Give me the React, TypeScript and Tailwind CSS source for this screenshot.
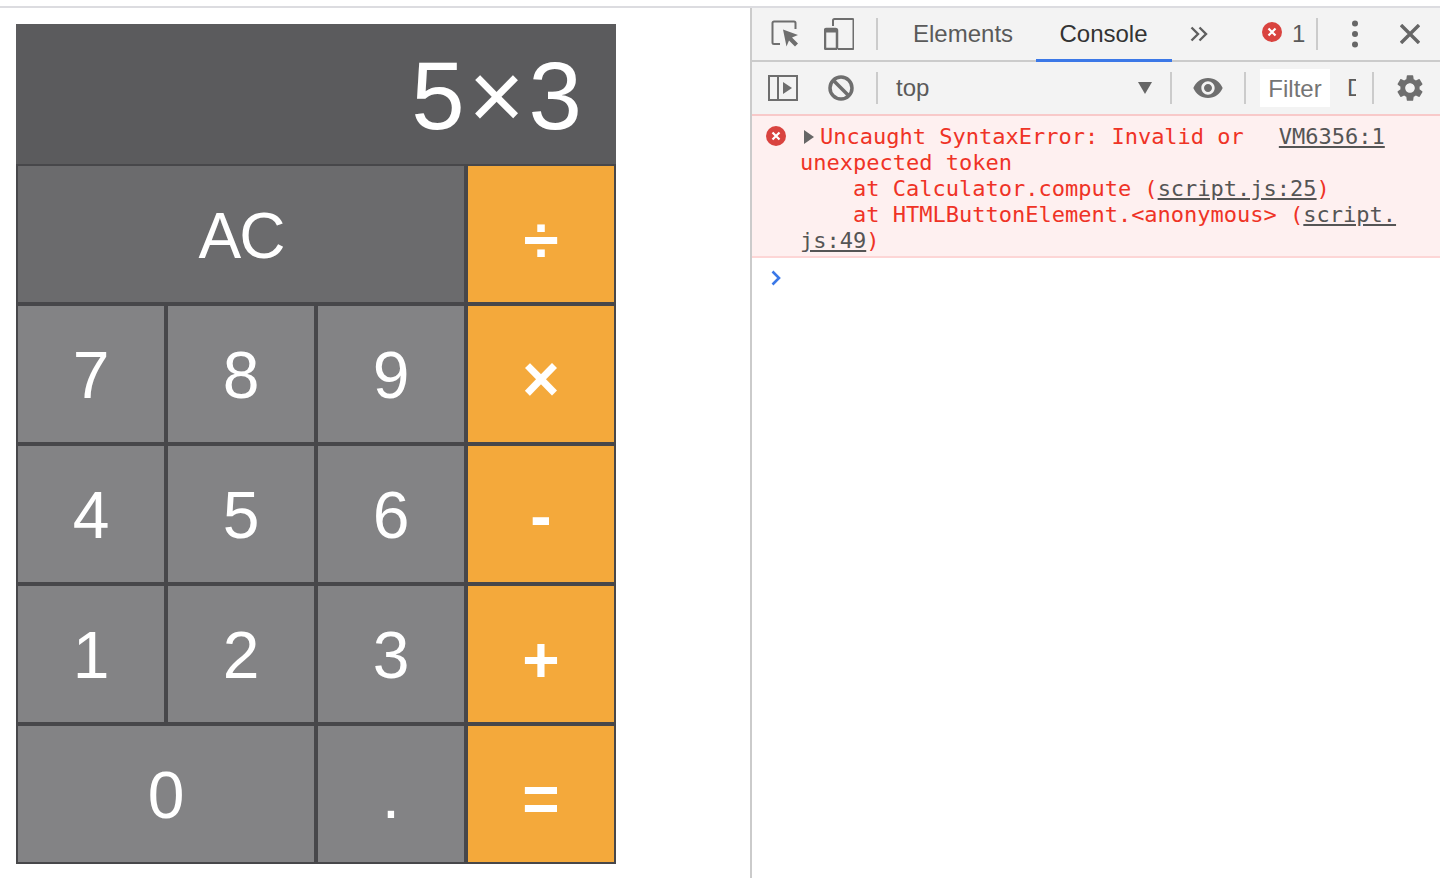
import React from "react";
import { MdSettings, MdRemoveRedEye } from "react-icons/md";

const digitCls = "border-2 border-[#47474a] bg-[#838385] flex items-center justify-center pt-[2px] text-[66px]";
const opCls = "border-2 border-[#47474a] bg-[#f4a93b] flex items-center justify-center font-bold";

const Sep = ({ className = "" }: { className?: string }) => (
  <div className={`w-[2px] bg-[#cbcbcb] shrink-0 ${className}`} />
);

const ErrorDot = () => (
  <svg viewBox="0 0 20 20" className="w-5 h-5 block shrink-0">
    <circle cx="10" cy="10" r="10" fill="#d9433f" />
    <path d="M6.5 6.5l7 7M13.5 6.5l-7 7" stroke="#fff" strokeWidth="2.2" />
  </svg>
);

const Calculator = () => (
  <div className="w-[600px] grid grid-cols-4 auto-rows-[140px] text-white text-[64px] font-['Liberation_Sans',sans-serif]">
    <div className="col-span-4 bg-[#5b5b5d] flex items-center justify-end pr-[30px] pt-[4px] text-[96px] tracking-[4px]">5×3</div>
    <div className="col-span-3 border-2 border-[#47474a] bg-[#6b6b6d] flex items-center justify-center pt-[4px] tracking-[-2px]">AC</div>
    <div className={`${opCls} pt-[11px]`}>÷</div>
    <div className={digitCls}>7</div>
    <div className={digitCls}>8</div>
    <div className={digitCls}>9</div>
    <div className={`${opCls} pt-[10px]`}>×</div>
    <div className={digitCls}>4</div>
    <div className={digitCls}>5</div>
    <div className={digitCls}>6</div>
    <div className={`${opCls} pt-[4px]`}>-</div>
    <div className={digitCls}>1</div>
    <div className={digitCls}>2</div>
    <div className={digitCls}>3</div>
    <div className={`${opCls} pt-[11px]`}>+</div>
    <div className={`col-span-2 ${digitCls}`}>0</div>
    <div className={digitCls}>.</div>
    <div className={`${opCls} pt-[10px]`}>=</div>
  </div>
);

const TopToolbar = () => (
  <div className="h-[54px] bg-[#f3f3f3] border-b-2 border-[#cbcbcb] flex items-center text-[24px] text-[#5a5a5a]">
    <svg viewBox="0 0 28 28" className="w-7 h-7 ml-[19px] shrink-0" fill="none">
      <path d="M9 24H3a1.5 1.5 0 0 1-1.500-1.500V3A1.500 1.500 0 0 1 3 1.500h20A1.500 1.500 0 0 1 24.500 3v6" stroke="#6e6e6e" strokeWidth="2" />
      <path d="M12 9.500l15 5.500-6 2.500 6 6-3 3-6-6-2.500 6z" fill="#6e6e6e" />
    </svg>
    <svg viewBox="0 0 30 32" className="w-[30px] h-8 ml-[25px] shrink-0" fill="none">
      <path d="M9 8V2.500A1.500 1.500 0 0 1 10.500 1h18A1 1 0 0 1 29.500 2v28a1 1 0 0 1-1 1H14" stroke="#6e6e6e" strokeWidth="2" />
      <rect x="1" y="11" width="12" height="20" rx="1.500" stroke="#6e6e6e" strokeWidth="2.500" />
      <rect x="1" y="11" width="12" height="3.500" fill="#6e6e6e" />
    </svg>
    <Sep className="h-8 ml-[22px]" />
    <div className="ml-[35px] w-[123px]">Elements</div>
    <div className="self-stretch -mb-[2px] w-[136px] pr-[1px] flex items-center justify-center border-b-[3px] border-[#3b78e7] text-[#333]">Console</div>
    <svg viewBox="0 0 18 16" className="w-[18px] h-4 ml-[18px] shrink-0" fill="none" stroke="#5f5f5f" strokeWidth="2.400">
      <path d="M1.500 1.500L8 8l-6.500 6.500M9.500 1.500L16 8l-6.500 6.500" />
    </svg>
    <div className="ml-[54px] -mt-[4px]"><ErrorDot /></div>
    <div className="ml-[10px] w-[10px]">1</div>
    <Sep className="h-8 ml-[14px]" />
    <svg viewBox="0 0 8 28" className="w-2 h-7 ml-[33px] shrink-0" fill="#666">
      <circle cx="4" cy="3.500" r="3" />
      <circle cx="4" cy="14" r="3" />
      <circle cx="4" cy="24.500" r="3" />
    </svg>
    <svg viewBox="0 0 20 20" className="w-5 h-5 ml-[41px] shrink-0" fill="none" stroke="#666" strokeWidth="3.400">
      <path d="M1 1l18 18M19 1L1 19" />
    </svg>
  </div>
);

const ConsoleToolbar = () => (
  <div className="h-[54px] bg-[#f3f3f3] border-b-2 border-[#f8c9c9] flex items-center text-[24px] text-[#5a5a5a]">
    <svg viewBox="0 0 30 26" className="w-[30px] h-[26px] ml-[16px] shrink-0" fill="none" stroke="#6e6e6e" strokeWidth="2">
      <rect x="1" y="1" width="28" height="24" />
      <path d="M10 1v24" />
      <path d="M15 7l9 6-9 6z" fill="#6e6e6e" stroke="none" />
    </svg>
    <svg viewBox="0 0 26 26" className="w-[26px] h-[26px] ml-[30px] shrink-0" fill="none" stroke="#6e6e6e" strokeWidth="3.500">
      <circle cx="13" cy="13" r="11" />
      <path d="M5.500 5.500l15 15" />
    </svg>
    <Sep className="h-8 ml-[22px]" />
    <div className="ml-[18px] w-[242px]">top</div>
    <div className="w-0 h-0 border-x-[7px] border-x-transparent border-t-[12px] border-t-[#666]" />
    <Sep className="h-8 ml-[18px]" />
    <MdRemoveRedEye className="w-8 h-8 ml-[20px] text-[#6e6e6e] shrink-0" />
    <Sep className="h-8 ml-[20px]" />
    <div className="ml-[14px] w-[70px] h-[38px] pt-[2px] bg-white flex items-center justify-center text-[#757575] shrink-0">Filter</div>
    <div className="ml-[17px] w-[9px] overflow-hidden">D</div>
    <Sep className="h-8 ml-[16px]" />
    <MdSettings className="w-8 h-8 ml-[20px] text-[#6e6e6e] shrink-0" />
  </div>
);

const Link = ({ children }: { children: React.ReactNode }) => (
  <span className="text-[#555] underline">{children}</span>
);

const ErrorRow = () => (
  <div className="bg-[#fef0f0] border-b-2 border-[#fdd6d6] h-[142px] flex text-[22px] leading-[26px] text-[#ef3326] font-['DejaVu_Sans_Mono',monospace] whitespace-pre pt-[8px]">
    <div className="w-[48px] pl-[14px] pt-[2px] shrink-0"><ErrorDot /></div>
    <div className="flex-1">
      <div className="flex items-center">
        <div className="w-0 h-0 ml-[4px] mr-[6px] border-y-[7px] border-y-transparent border-l-[10px] border-l-[#666]" />
        <span>Uncaught SyntaxError: Invalid or</span>
        <span className="ml-[35px]"><Link>VM6356:1</Link></span>
      </div>
      <div>unexpected token</div>
      <div>    at Calculator.compute (<Link>script.js:25</Link>)</div>
      <div>    at HTMLButtonElement.&lt;anonymous&gt; (<Link>script.</Link></div>
      <div><Link>js:49</Link>)</div>
    </div>
  </div>
);

export default function App() {
  return (
    <div className="h-[878px] bg-white overflow-hidden font-['Liberation_Sans',sans-serif]">
      <div className="h-2 border-b-2 border-[#dcdce0]" />
      <div className="flex h-[870px]">
        <div className="w-[750px] pl-4 pt-4 shrink-0">
          <Calculator />
        </div>
        <div className="flex-1 border-l-2 border-[#cbcbcb]">
          <TopToolbar />
          <ConsoleToolbar />
          <ErrorRow />
          <svg viewBox="0 0 10 16" className="w-[10px] h-4 ml-[19px] mt-[12px]" fill="none" stroke="#3b78e7" strokeWidth="2.600">
            <path d="M1.500 1.500L8 8l-6.500 6.500" />
          </svg>
        </div>
      </div>
    </div>
  );
}
